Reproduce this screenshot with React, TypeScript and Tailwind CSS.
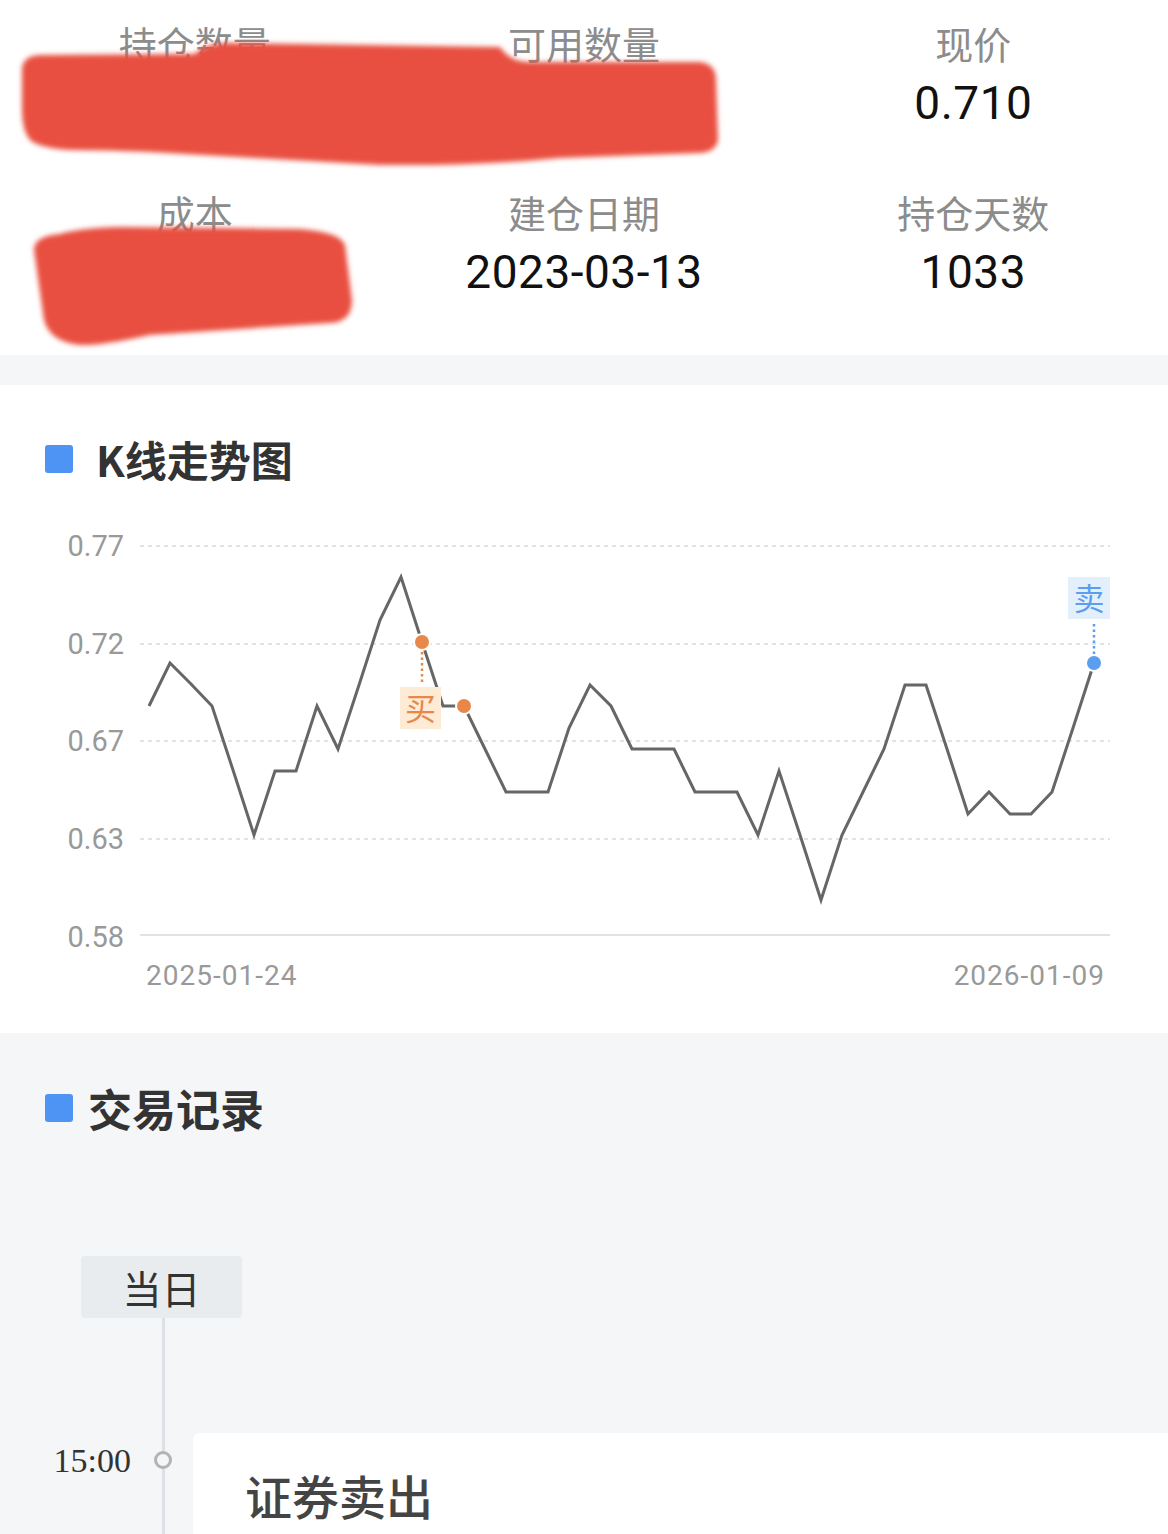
const prices = [
  706, 663, 684, 706, 770, 835, 771, 771, 706, 749, 685, 620, 577, 642, 706, 706,
  749, 792, 792, 792, 728, 685, 706, 749, 749, 749, 792, 792, 792, 835, 771, 835,
  900, 835, 792, 749, 685, 685, 749, 814, 792, 814, 814, 792, 728, 663,
];

const cjk = "font-['Noto_Sans_CJK_SC',sans-serif]";
const num = "font-['Roboto','Noto_Sans_CJK_SC',sans-serif]";

const Stat = ({ label, value }: { label: string; value: string }) => (
  <div className="flex flex-col items-center">
    <div className={`${cjk} h-[48px] text-[38px] leading-[48px] text-[#8c8c8c]`}>{label}</div>
    <div className={`${num} mt-[8px] h-[56px] text-[46px] leading-[56px] tracking-[0.5px] text-[#111]`}>{value}</div>
  </div>
);

const SectionTitle = ({ text, gap, size }: { text: string; gap: string; size: string }) => (
  <div className={`flex items-center pl-[45px] ${gap}`}>
    <span className="h-[28px] w-[28px] rounded-[3px] bg-[#4d94f5]" />
    <span className={`${cjk} ${size} font-bold leading-[56px] text-[#333]`}>{text}</span>
  </div>
);

const Chart = () => {
  const pts = prices.map((y, i) => `${149 + 21 * i},${y}`).join(" ");
  const grid = [
    { y: 546, t: "0.77" },
    { y: 644, t: "0.72" },
    { y: 741, t: "0.67" },
    { y: 839, t: "0.63" },
  ];
  return (
    <svg width="1168" height="480" viewBox="0 520 1168 480" className="block">
      {grid.map((g) => (
        <g key={g.t}>
          <line x1="140" x2="1110" y1={g.y} y2={g.y} stroke="#dadada" strokeWidth="1.5" strokeDasharray="4 4" />
          <text x="124" y={g.y + 10} textAnchor="end" fontSize="29" fill="#999" fontFamily="Roboto">
            {g.t}
          </text>
        </g>
      ))}
      <line x1="140" x2="1110" y1="935" y2="935" stroke="#e2e2e2" strokeWidth="2" />
      <text x="124" y="947" textAnchor="end" fontSize="29" fill="#999" fontFamily="Roboto">
        0.58
      </text>
      <text x="146" y="985" fontSize="28" fill="#999" fontFamily="Roboto" letterSpacing="1">
        2025-01-24
      </text>
      <text x="1105" y="985" textAnchor="end" fontSize="28" fill="#999" fontFamily="Roboto" letterSpacing="1">
        2026-01-09
      </text>
      <polyline points={pts} fill="none" stroke="#666" strokeWidth="3" />

      {/* buy */}
      <line x1="422" x2="422" y1="652" y2="684" stroke="#e8874a" strokeWidth="2.5" strokeDasharray="2.5 3" />
      <rect x="400" y="687" width="41" height="42" fill="#fdebd6" />
      <text x="420.5" y="720" textAnchor="middle" fontSize="31" fill="#e8874a" fontFamily="Noto Sans CJK SC">
        买
      </text>
      <circle cx="422" cy="642" r="8" fill="#e8874a" stroke="#fff" strokeWidth="2" />
      <circle cx="464" cy="706" r="8" fill="#e8874a" stroke="#fff" strokeWidth="2" />

      {/* sell */}
      <rect x="1068" y="577" width="42" height="42" fill="#e4effc" />
      <text x="1089" y="610" textAnchor="middle" fontSize="31" fill="#5b9ef0" fontFamily="Noto Sans CJK SC">
        卖
      </text>
      <line x1="1094" x2="1094" y1="624" y2="654" stroke="#5b9ef0" strokeWidth="2.5" strokeDasharray="2.5 3" />
      <circle cx="1094" cy="663" r="8" fill="#5b9ef0" stroke="#fff" strokeWidth="2" />
    </svg>
  );
};

export default function App() {
  return (
    <div className="h-[1534px] w-[1168px] overflow-hidden bg-[#f5f6f8]">
      {/* holdings summary */}
      <section className="relative h-[355px] bg-white">
        <div className="grid grid-cols-3 gap-y-[57px] pt-[19px]">
          <Stat label="持仓数量" value=" " />
          <Stat label="可用数量" value=" " />
          <Stat label="现价" value="0.710" />
          <Stat label="成本" value=" " />
          <Stat label="建仓日期" value="2023-03-13" />
          <Stat label="持仓天数" value="1033" />
        </div>
        <svg className="pointer-events-none absolute inset-0" width="1168" height="355">
          <defs>
            <filter id="soft" x="-5%" y="-10%" width="110%" height="120%">
              <feGaussianBlur stdDeviation="2.5" />
            </filter>
          </defs>
          <path
            filter="url(#soft)"
            fill="#e8503f"
            d="M22 70 Q22 56 40 55 L195 54 Q205 43 230 43 L500 47 Q510 62 530 62 L700 62 Q716 64 716 80 L718 140 Q716 152 700 153 L560 158 Q480 166 380 165 L150 152 Q100 150 70 150 Q40 148 30 140 Q22 130 22 110 Z"
          />
          <path
            filter="url(#soft)"
            fill="#e8503f"
            d="M34 250 Q34 236 60 234 Q80 228 120 227 L300 229 Q340 232 345 245 L352 300 Q352 322 330 323 L150 335 Q100 346 80 345 Q50 342 44 320 Z"
          />
        </svg>
      </section>

      {/* k-line chart */}
      <section className="mt-[30px] h-[648px] bg-white pt-[46px]">
        <SectionTitle text="K线走势图" gap="gap-[23px]" size="text-[42px]" />
        <div className="mt-[33px]">
          <Chart />
        </div>
      </section>

      {/* trade records */}
      <section className="pt-[47px]">
        <SectionTitle text="交易记录" gap="gap-[15px]" size="text-[44px]" />
        <div
          className={`${cjk} ml-[81px] mt-[120px] flex h-[62px] w-[161px] items-center justify-center rounded-[4px] bg-[#e9ecef] text-[39px] text-[#333]`}
        >
          当日
        </div>
        <div className="flex h-[300px]">
          <div className="w-[155px] pr-[24px] pt-[123px] text-right font-['Liberation_Serif',serif] text-[34px] leading-[40px] text-[#333]">
            15:00
          </div>
          <div className="flex w-[16px] flex-col items-center">
            <div className="h-[133px] w-[3px] bg-[#dde1e5]" />
            <div className="h-[18px] w-[18px] rounded-full border-[3px] border-[#b3b3b3] bg-[#f5f6f8]" />
            <div className="w-[3px] flex-1 bg-[#dde1e5]" />
          </div>
          <div className="flex-1 pl-[22px] pt-[115px]">
            <div className="h-full rounded-tl-[6px] bg-white pl-[52px] pt-[32px]">
              <div className={`${cjk} text-[47px] font-medium leading-[60px] text-[#444]`}>证券卖出</div>
            </div>
          </div>
        </div>
      </section>
    </div>
  );
}
